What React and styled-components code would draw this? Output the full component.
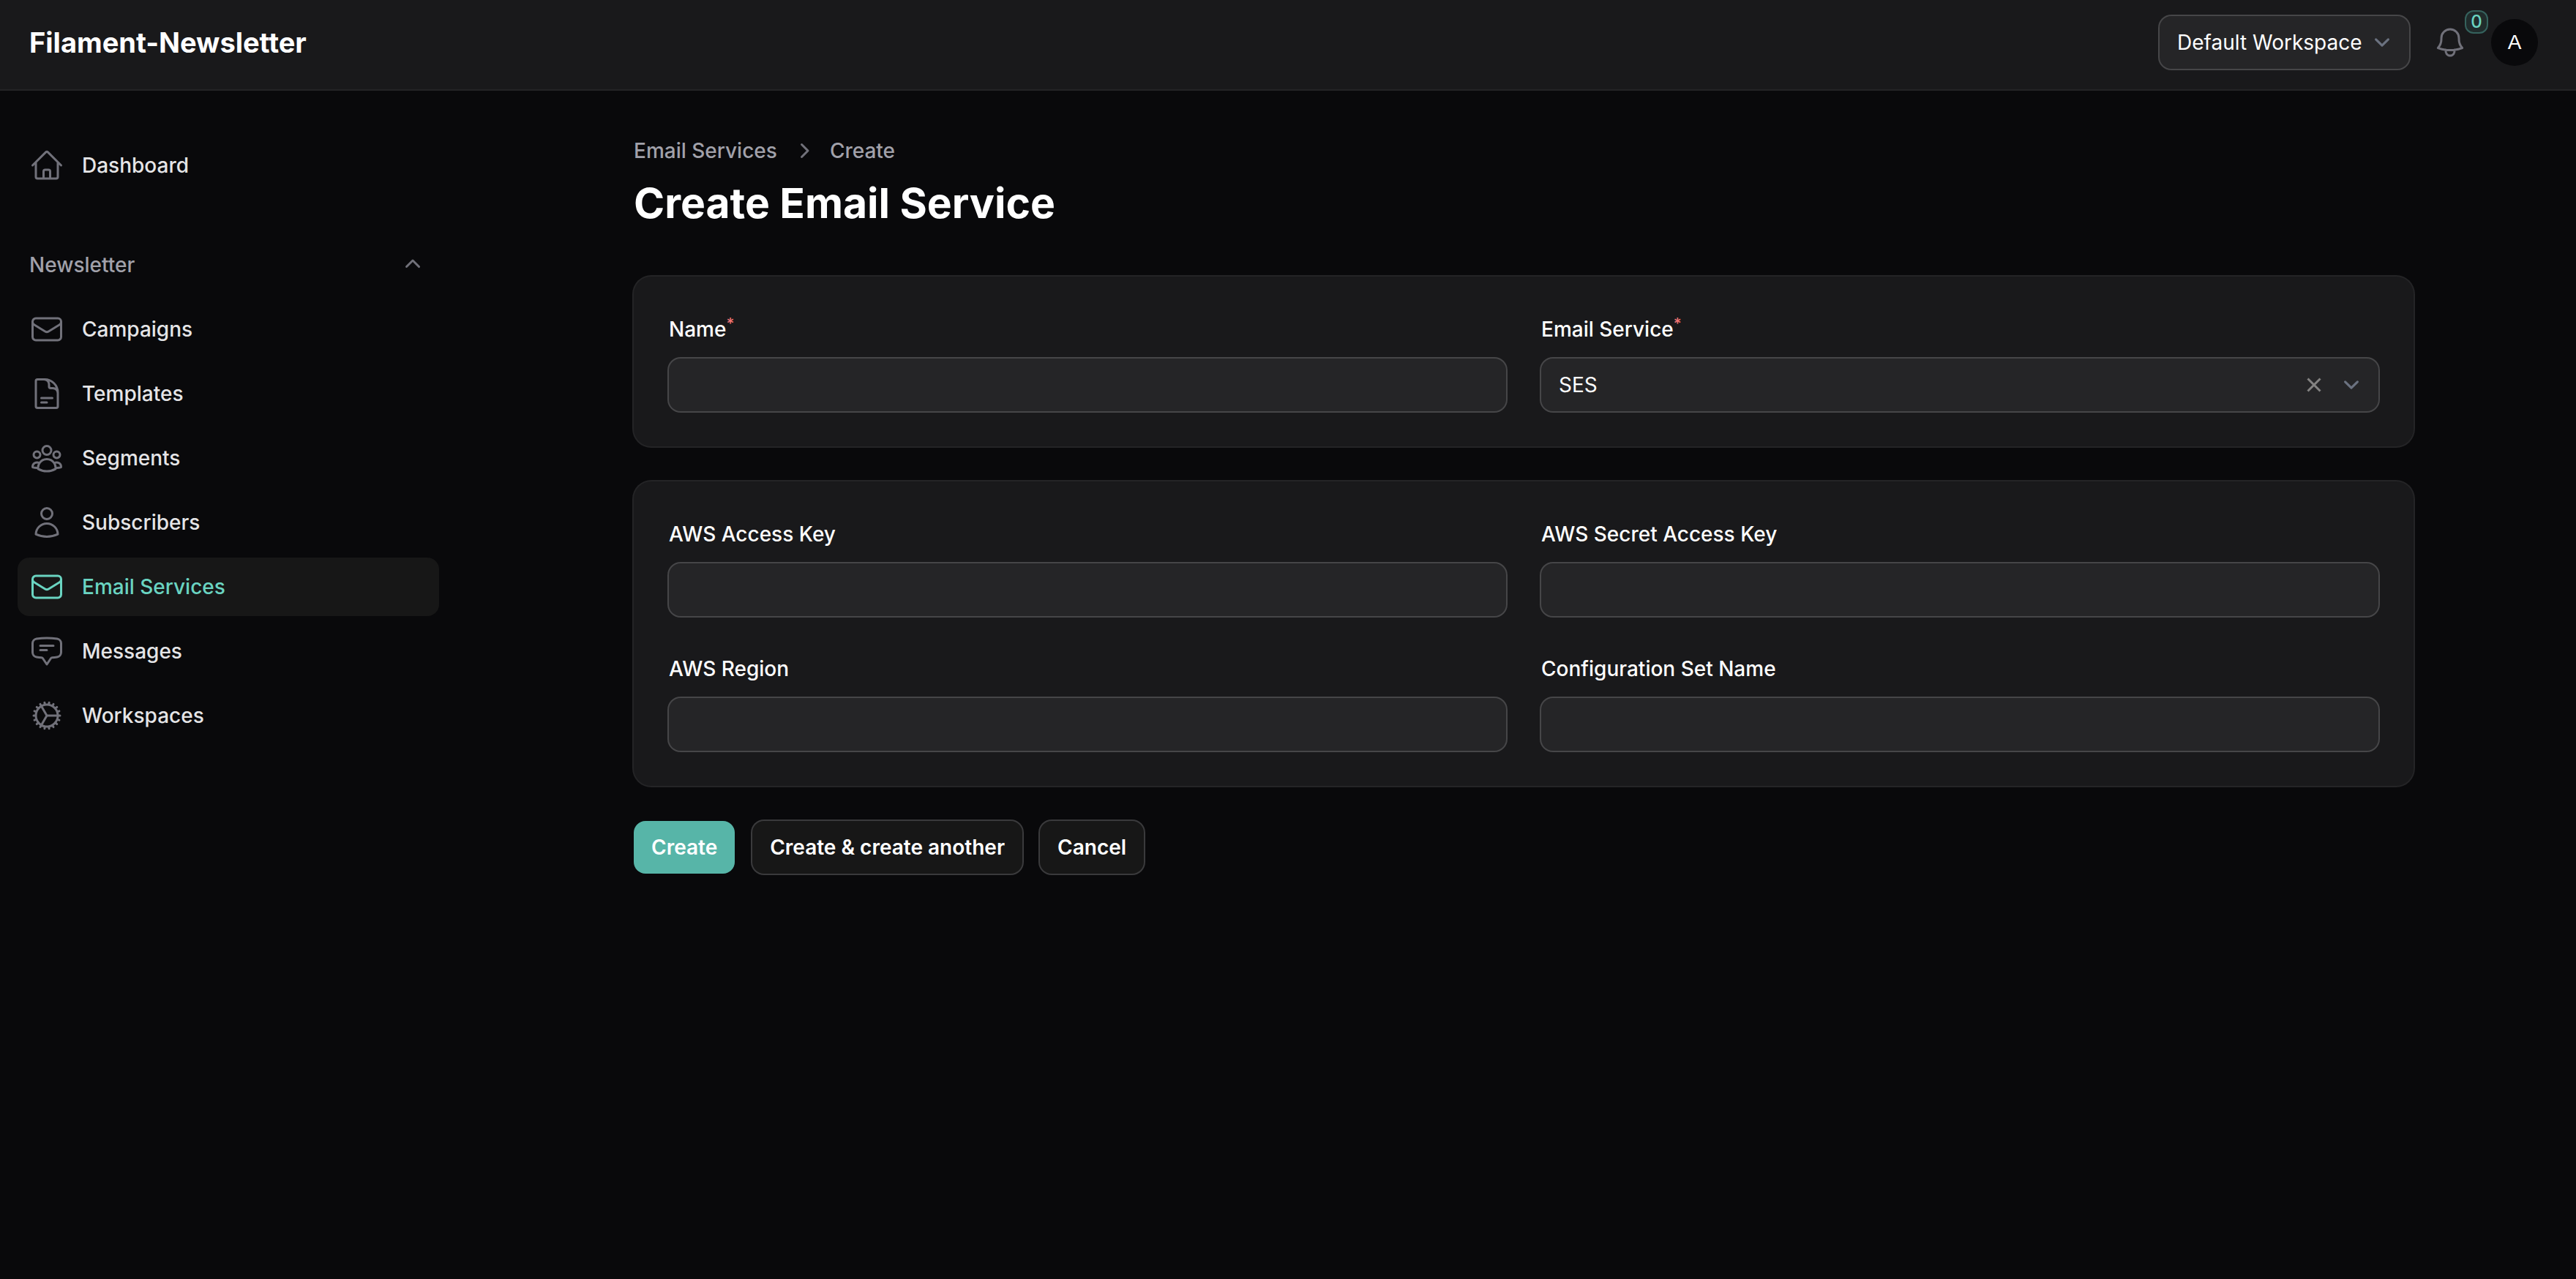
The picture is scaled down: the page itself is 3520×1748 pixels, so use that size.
import React, { useState } from "react";
import styled, { createGlobalStyle } from "styled-components";
import {
  HiOutlineHome,
  HiOutlineEnvelope,
  HiOutlineDocumentText,
  HiOutlineUserGroup,
  HiOutlineUser,
  HiOutlineChatBubbleBottomCenterText,
  HiOutlineCog,
  HiOutlineBell,
  HiMiniChevronUp,
  HiMiniChevronRight,
} from "react-icons/hi2";

const color = {
  page: "#09090b",
  surface: "#19191b",
  surfaceRing: "#242426",
  field: "#252527",
  fieldRing: "#464648",
  raised: "#171717",
  raisedRing: "#3a3a3c",
  accent: "#6ad4c1",
  button: "#57b5a8",
  text: "#ffffff",
  navText: "#e5e5e7",
  muted: "#a1a1aa",
  icon: "#71717a",
  chevron: "#6b7280",
};

const GlobalStyle = createGlobalStyle`
  *, *::before, *::after { box-sizing: border-box; }
  body {
    margin: 0;
    background: ${color.page};
    color: ${color.text};
    font-family: Inter, "Liberation Sans", sans-serif;
    font-size: 28px;
    line-height: 48px;
    -webkit-font-smoothing: antialiased;
  }
  button, input, select { font: inherit; color: inherit; }
`;

const Page = styled.div`
  display: flex;
  flex-direction: column;
  min-height: 100vh;
`;

const Topbar = styled.header`
  display: flex;
  align-items: center;
  justify-content: space-between;
  height: 124px;
  padding: 0 52px 6px 40px;
  background: ${color.surface};
  border-bottom: 2px solid ${color.surfaceRing};
`;

const Brand = styled.a`
  color: ${color.text};
  font-size: 38px;
  font-weight: 700;
  line-height: 40px;
  text-decoration: none;
`;

const TopbarTools = styled.div`
  display: flex;
  align-items: center;
  gap: 32px;
`;

const BellButton = styled.button`
  position: relative;
  display: flex;
  padding: 0;
  border: 0;
  background: none;
  color: ${color.icon};
`;

const Badge = styled.span`
  position: absolute;
  top: -20px;
  left: 44px;
  min-width: 32px;
  border: 2px solid #35625d;
  border-radius: 12px;
  background: #202c2c;
  color: ${color.accent};
  font-size: 24px;
  font-weight: 500;
  line-height: 28px;
  text-align: center;
`;

const Avatar = styled.button`
  width: 64px;
  height: 64px;
  padding: 0;
  border: 0;
  border-radius: 50%;
  background: ${color.page};
  font-family: "Liberation Sans", sans-serif;
  line-height: 64px;
`;

const Body = styled.div`
  display: flex;
  flex: 1;
`;

const Sidebar = styled.nav`
  display: flex;
  flex: 0 0 644px;
  flex-direction: column;
  gap: 56px;
  padding: 62px 44px 64px 24px;
`;

const NavGroup = styled.div`
  display: flex;
  flex-direction: column;
  gap: 8px;
`;

const GroupToggle = styled.button`
  display: flex;
  align-items: center;
  justify-content: space-between;
  padding: 16px;
  border: 0;
  background: none;
  color: ${color.muted};
  font-weight: 500;
  line-height: 48px;

  svg {
    color: ${color.icon};
  }
`;

const NavList = styled.ul`
  display: flex;
  flex-direction: column;
  gap: 8px;
  margin: 0;
  padding: 0;
  list-style: none;
`;

const NavLink = styled.a`
  display: flex;
  align-items: center;
  gap: 24px;
  padding: 16px;
  border-radius: 16px;
  background: ${(p) => (p.$active ? color.raised : "transparent")};
  color: ${(p) => (p.$active ? color.accent : color.navText)};
  font-weight: 500;
  text-decoration: none;

  svg {
    flex: none;
    color: ${(p) => (p.$active ? color.accent : color.icon)};
  }
`;

const Main = styled.main`
  display: flex;
  flex: 1;
  justify-content: center;
  padding: 62px 64px 64px;
`;

const Content = styled.div`
  flex: 1;
  max-width: 2432px;
`;

const Breadcrumbs = styled.ol`
  display: flex;
  align-items: center;
  gap: 16px;
  margin: 0 0 16px;
  padding: 0;
  list-style: none;
  color: ${color.muted};
  font-weight: 500;
  line-height: 40px;
`;

const Crumb = styled.li`
  display: flex;
  align-items: center;
  gap: 16px;

  a {
    color: inherit;
    text-decoration: none;
  }

  svg {
    color: ${color.icon};
  }
`;

const Heading = styled.h1`
  margin: 0 0 64px;
  font-size: 57px;
  font-weight: 700;
  line-height: 72px;
`;

const Form = styled.form`
  display: flex;
  flex-direction: column;
  gap: 48px;
`;

const Card = styled.section`
  display: grid;
  grid-template-columns: 1fr 1fr;
  gap: 48px;
  padding: 48px;
  border-radius: 24px;
  background: ${color.surface};
  box-shadow: 0 0 0 2px ${color.surfaceRing};
`;

const Field = styled.div`
  display: flex;
  flex-direction: column;
  gap: 16px;
`;

const Label = styled.label`
  align-self: flex-start;
  height: 48px;
  font-weight: 500;

  sup {
    color: #f17474;
    font-size: 21px;
    line-height: 0;
  }
`;

const TextInput = styled.input`
  width: 100%;
  height: 72px;
  padding: 0 24px;
  border: 0;
  border-radius: 16px;
  outline: 0;
  background: ${color.field};
  box-shadow: 0 0 0 2px ${color.fieldRing};
`;

const SelectShell = styled.div`
  display: flex;
  align-items: center;
  gap: 6px;
  height: 72px;
  padding-right: 16px;
  border-radius: 16px;
  background: ${color.field};
  box-shadow: 0 0 0 2px ${color.fieldRing};

  select {
    flex: 1;
    height: 100%;
    padding: 0 0 0 24px;
    border: 0;
    outline: 0;
    appearance: none;
    background: none;
  }

  svg {
    flex: none;
  }
`;

const ClearButton = styled.button`
  display: flex;
  align-items: center;
  justify-content: center;
  width: 48px;
  height: 48px;
  padding: 0;
  border: 0;
  background: none;
  color: #848382;
`;

const Actions = styled.div`
  display: flex;
  gap: 24px;
`;

const ActionButton = styled.button`
  height: 72px;
  padding: 0 24px;
  border: 0;
  border-radius: 16px;
  background: ${(p) => (p.$primary ? color.button : color.raised)};
  box-shadow: ${(p) => (p.$primary ? "none" : `0 0 0 2px ${color.raisedRing}`)};
  font-weight: 600;
`;

function SelectChevron() {
  return (
    <svg width="42" height="42" viewBox="0 0 20 20" fill="none" aria-hidden="true">
      <path
        d="M6 8l4 4 4-4"
        stroke={color.chevron}
        strokeWidth="1.5"
        strokeLinecap="round"
        strokeLinejoin="round"
      />
    </svg>
  );
}

function ClearIcon() {
  return (
    <svg width="20" height="20" viewBox="0 0 20 20" fill="none" aria-hidden="true">
      <path d="M1.5 1.5l17 17M18.5 1.5l-17 17" stroke="currentColor" strokeWidth="3" />
    </svg>
  );
}

const newsletterLinks = [
  { label: "Campaigns", icon: HiOutlineEnvelope },
  { label: "Templates", icon: HiOutlineDocumentText },
  { label: "Segments", icon: HiOutlineUserGroup },
  { label: "Subscribers", icon: HiOutlineUser },
  { label: "Email Services", icon: HiOutlineEnvelope, active: true },
  { label: "Messages", icon: HiOutlineChatBubbleBottomCenterText },
  { label: "Workspaces", icon: HiOutlineCog },
];

function NavItem({ label, icon: Icon, active }) {
  return (
    <li>
      <NavLink href="#" $active={active} aria-current={active ? "page" : undefined}>
        <Icon size={48} />
        {label}
      </NavLink>
    </li>
  );
}

function TextField({ id, label, required }) {
  return (
    <Field>
      <Label htmlFor={id}>
        {label}
        {required && <sup>*</sup>}
      </Label>
      <TextInput id={id} type="text" required={required} />
    </Field>
  );
}

export default function App() {
  const [service, setService] = useState("SES");
  const [open, setOpen] = useState(true);

  return (
    <Page>
      <GlobalStyle />
      <Topbar>
        <Brand href="#">Filament-Newsletter</Brand>
        <TopbarTools>
          <SelectShell>
            <select aria-label="Workspace">
              <option>Default Workspace</option>
            </select>
            <SelectChevron />
          </SelectShell>
          <BellButton type="button" aria-label="Notifications">
            <HiOutlineBell size={48} />
            <Badge>0</Badge>
          </BellButton>
          <Avatar type="button">A</Avatar>
        </TopbarTools>
      </Topbar>

      <Body>
        <Sidebar>
          <NavList>
            <NavItem label="Dashboard" icon={HiOutlineHome} />
          </NavList>
          <NavGroup>
            <GroupToggle type="button" aria-expanded={open} onClick={() => setOpen(!open)}>
              Newsletter
              <HiMiniChevronUp size={40} />
            </GroupToggle>
            {open && (
              <NavList>
                {newsletterLinks.map((link) => (
                  <NavItem key={link.label} {...link} />
                ))}
              </NavList>
            )}
          </NavGroup>
        </Sidebar>

        <Main>
          <Content>
            <Breadcrumbs>
              <Crumb>
                <a href="#">Email Services</a>
              </Crumb>
              <Crumb>
                <HiMiniChevronRight size={40} />
                <a href="#">Create</a>
              </Crumb>
            </Breadcrumbs>
            <Heading>Create Email Service</Heading>

            <Form onSubmit={(e) => e.preventDefault()}>
              <Card>
                <TextField id="name" label="Name" required />
                <Field>
                  <Label htmlFor="service">
                    Email Service<sup>*</sup>
                  </Label>
                  <SelectShell>
                    <select
                      id="service"
                      value={service}
                      onChange={(e) => setService(e.target.value)}
                    >
                      <option value="" />
                      <option value="SES">SES</option>
                    </select>
                    <ClearButton
                      type="button"
                      aria-label="Clear email service"
                      onClick={() => setService("")}
                    >
                      <ClearIcon />
                    </ClearButton>
                    <SelectChevron />
                  </SelectShell>
                </Field>
              </Card>

              <Card>
                <TextField id="access-key" label="AWS Access Key" />
                <TextField id="secret-key" label="AWS Secret Access Key" />
                <TextField id="region" label="AWS Region" />
                <TextField id="config-set" label="Configuration Set Name" />
              </Card>

              <Actions>
                <ActionButton type="submit" $primary>
                  Create
                </ActionButton>
                <ActionButton type="button">Create &amp; create another</ActionButton>
                <ActionButton type="button">Cancel</ActionButton>
              </Actions>
            </Form>
          </Content>
        </Main>
      </Body>
    </Page>
  );
}
